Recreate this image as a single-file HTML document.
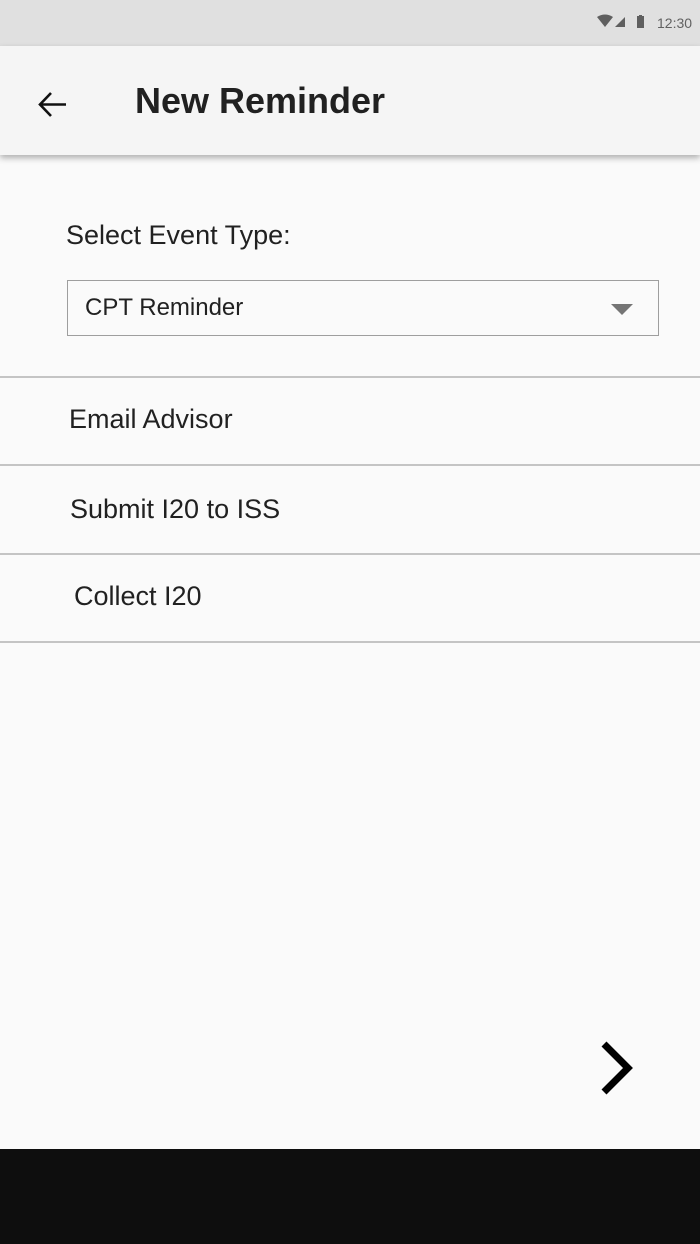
<!DOCTYPE html>
<html><head><style>
body{margin:0;width:700px;height:1244px;background:#fafafa;font-family:"Liberation Sans",sans-serif;position:relative;overflow:hidden;color:#212121}
.a{position:absolute;white-space:nowrap}
.line{position:absolute;left:0;width:700px;height:2px;background:#c4c4c4}
</style></head><body>
<div class="a" style="left:0;top:0;width:700px;height:46px;background:#e0e0e0"></div>
<svg class="a" style="left:596px;top:14px" width="60" height="16" viewBox="0 0 60 16">
<path d="M1 3 Q9 -2 17 3 L9 13 Z" fill="#5f5f5f"/>
<path d="M19 13 L29 3 L29 13 Z" fill="#5f5f5f"/>
<rect x="41" y="2" width="7" height="12" fill="#5f5f5f"/><rect x="43" y="1" width="3" height="2" fill="#5f5f5f"/>
</svg>
<div class="a" style="left:657px;top:15px;font-size:14px;color:#616161">12:30</div>
<div class="a" style="left:0;top:46px;width:700px;height:109px;background:#f5f5f5;box-shadow:0 3px 6px rgba(0,0,0,0.3)"></div>
<svg class="a" style="left:36px;top:90px" width="32" height="30" viewBox="0 0 32 30">
<path d="M4 14.5 H30 M15 3 L4 14.5 L15 26" stroke="#111" stroke-width="2.6" fill="none"/>
</svg>
<div class="a" style="left:135px;top:80px;font-size:36px;font-weight:bold;color:#212121">New Reminder</div>
<div class="a" style="left:66px;top:220px;font-size:27px">Select Event Type:</div>
<div class="a" style="left:67px;top:280px;width:590px;height:54px;border:1px solid #9e9e9e"></div>
<div class="a" style="left:85px;top:294px;font-size:24px">CPT Reminder</div>
<svg class="a" style="left:611px;top:303px" width="22" height="12"><path d="M0 1 H22 L11 12 Z" fill="#757575"/></svg>
<div class="line" style="top:376px"></div>
<div class="a" style="left:69px;top:404px;font-size:27px">Email Advisor</div>
<div class="line" style="top:464px"></div>
<div class="a" style="left:70px;top:494px;font-size:27px">Submit I20 to ISS</div>
<div class="line" style="top:553px"></div>
<div class="a" style="left:74px;top:581px;font-size:27px">Collect I20</div>
<div class="line" style="top:641px"></div>
<svg class="a" style="left:596px;top:1038px" width="44" height="60"><path d="M8 6 L32 30 L8 54" stroke="#000" stroke-width="7" fill="none"/></svg>
<div class="a" style="left:0;top:1149px;width:700px;height:95px;background:#0e0e0e"></div>
</body></html>
